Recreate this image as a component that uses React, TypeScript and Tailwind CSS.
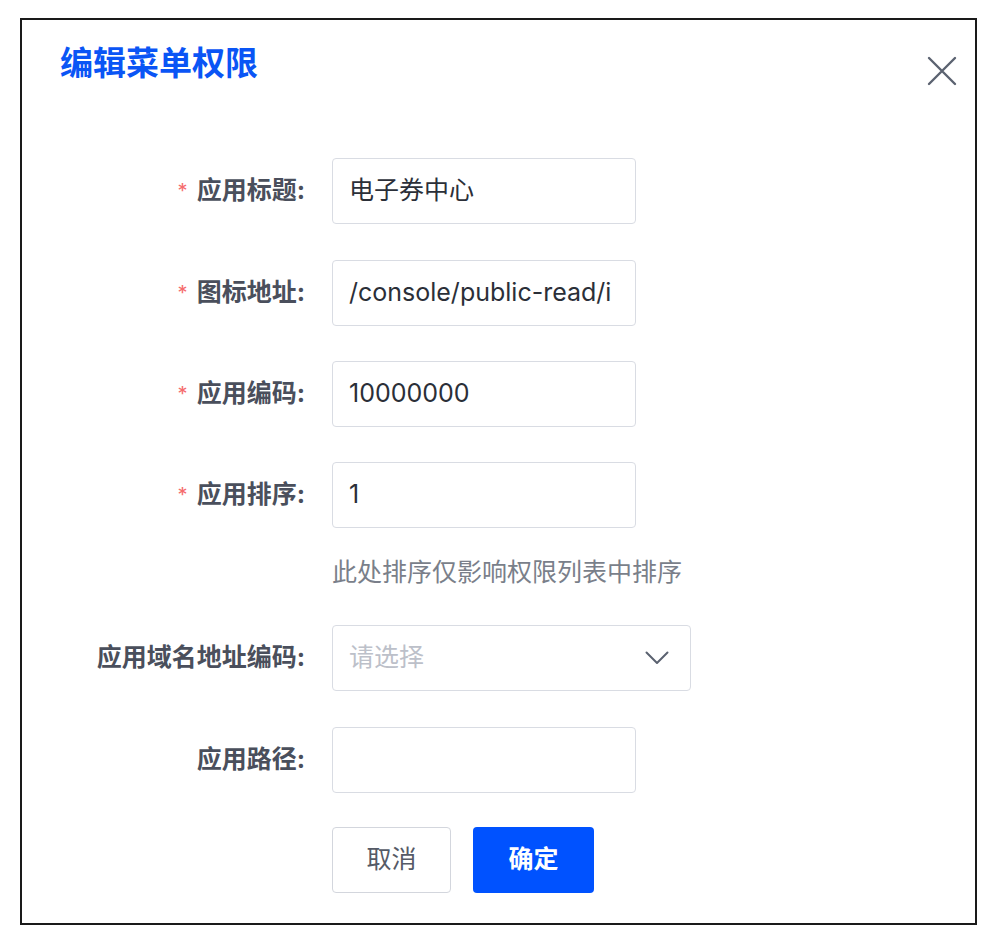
import React from "react";

const font = { fontFamily: '"Inter", "Noto Sans CJK SC", sans-serif' };

const Label = ({ text, required }: { text: string; required?: boolean }) => (
  <div className="w-[286px] pr-[3px] flex items-center justify-end text-[25px] font-bold text-[#4a4f5c] shrink-0">
    {required && <span className="text-[#f56c6c] text-[20px] mr-[9px] font-normal">*</span>}
    <span>{text}:</span>
  </div>
);

const TextInput = ({ value }: { value: string }) => (
  <div className="w-[304px] h-[66px] border border-[#d9dce3] rounded-[4px] px-[16px] flex items-center overflow-hidden whitespace-nowrap text-[25px] text-[#2b2f38]">
    {value}
  </div>
);

export default function App() {
  return (
    <div className="w-[1000px] h-[938px] bg-white pt-[18px] pl-[20px]" style={font}>
      <div className="w-[957px] h-[907px] border-2 border-[#1a1a1a] flex flex-col pl-[38px] pr-[18px] pt-[22px]">
        {/* Header */}
        <div className="flex justify-between items-start mb-[72px]">
          <h1 className="text-[33px] leading-[42px] font-bold text-[#0a55f5]">编辑菜单权限</h1>
          <svg width="30" height="30" viewBox="0 0 30 30" className="mt-[14px]">
            <path d="M2 2 L28 28 M28 2 L2 28" stroke="#5b6270" strokeWidth="2.4" strokeLinecap="round" />
          </svg>
        </div>

        {/* Form */}
        <div className="flex flex-col -ml-[38px]">
          <div className="flex items-center gap-[24px]">
            <Label text="应用标题" required />
            <TextInput value="电子券中心" />
          </div>
          <div className="flex items-center gap-[24px] mt-[36px]">
            <Label text="图标地址" required />
            <TextInput value="/console/public-read/i" />
          </div>
          <div className="flex items-center gap-[24px] mt-[35px]">
            <Label text="应用编码" required />
            <TextInput value="10000000" />
          </div>
          <div className="flex items-center gap-[24px] mt-[35px]">
            <Label text="应用排序" required />
            <TextInput value="1" />
          </div>
          <div className="ml-[310px] mt-[28px] h-[32px] leading-[32px] text-[25px] text-[#7a7f8a]">
            此处排序仅影响权限列表中排序
          </div>
          <div className="flex items-center gap-[24px] mt-[37px]">
            <Label text="应用域名地址编码" />
            <div className="w-[359px] h-[66px] border border-[#d9dce3] rounded-[4px] pl-[16px] pr-[21px] flex items-center justify-between">
              <span className="text-[25px] text-[#bcc0c9]">请选择</span>
              <svg width="24" height="14" viewBox="0 0 24 14">
                <path d="M1.5 1.5 L12 12 L22.5 1.5" fill="none" stroke="#5b6270" strokeWidth="2" strokeLinecap="round" strokeLinejoin="round" />
              </svg>
            </div>
          </div>
          <div className="flex items-center gap-[24px] mt-[36px]">
            <Label text="应用路径" />
            <TextInput value="" />
          </div>
          <div className="flex gap-[22px] ml-[310px] mt-[34px]">
            <button className="w-[119px] h-[66px] border border-[#d3d6dd] rounded-[4px] bg-white text-[25px] text-[#555a66]">
              取消
            </button>
            <button className="w-[121px] h-[66px] rounded-[4px] bg-[#0052ff] text-[25px] font-bold text-white">
              确定
            </button>
          </div>
        </div>
      </div>
    </div>
  );
}
